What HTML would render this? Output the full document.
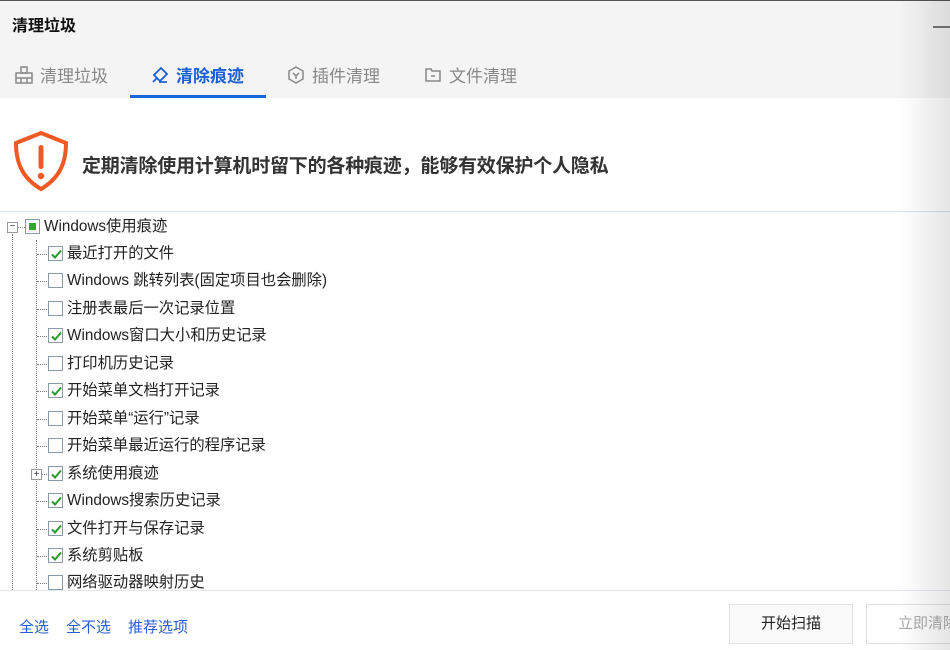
<!DOCTYPE html>
<html><head><meta charset="utf-8"><style>
*{margin:0;padding:0;box-sizing:border-box}
body{width:950px;height:650px;overflow:hidden;background:#fff;font-family:"Liberation Sans","Noto Sans CJK SC",sans-serif;position:relative}
.hdr{position:absolute;left:0;top:0;width:950px;height:98px;background:#f4f4f4;border-top:1px solid #555}
.title{position:absolute;left:12px;top:12px;font-size:16px;font-weight:bold;color:#111}
.min{position:absolute;left:933px;top:26px;width:17px;height:2px;background:#777}
.tab{position:absolute;top:62px;font-size:17px;color:#888;display:flex;align-items:center;gap:6px}
.tab.act{color:#1a5fd6;font-weight:bold}
.ul{position:absolute;left:130px;top:95px;width:136px;height:3px;background:#1a66dd}
.warn{position:absolute;left:82px;top:151px;font-size:19px;font-weight:bold;color:#333;letter-spacing:-0.2px}
.sep{position:absolute;left:0;top:211px;width:950px;height:1px;background:#d8e0ea}
.row{position:absolute;font-size:15.3px;color:#222;height:18px;line-height:18px;white-space:nowrap}
.cb{position:absolute;width:15px;height:15px;border:1px solid #8a99a8;background:#fff}
.cb svg{position:absolute;left:1px;top:1px}
.vl{position:absolute;border-left:1px dotted #777}
.hl{position:absolute;border-top:1px dotted #777;width:10px}
.bot{position:absolute;left:0;top:590px;width:950px;height:1px;background:#e3e8ee}
.lnk{position:absolute;top:616px;font-size:15px;color:#2a5bd7}
.btn{position:absolute;top:604px;height:40px;border:1px solid #e2e2e2;background:#fafafa;font-size:15px;color:#222;text-align:center;line-height:38px}
.shadow{position:absolute;left:900px;top:0;width:50px;height:650px;background:linear-gradient(to right,rgba(0,0,0,0),rgba(0,0,0,0.1))}
</style></head><body>
<div class="hdr"></div>
<div class="title">清理垃圾</div>
<div class="min"></div>
<div class="tab" style="left:14px"><svg width="20" height="20" viewBox="0 0 20 20" fill="none" stroke="#888" stroke-width="1.5"><rect x="7" y="2" width="6" height="6"/><rect x="2" y="8" width="16" height="10"/><path d="M2 13H18M7 13V18M13 13V18"/></svg>清理垃圾</div>
<div class="tab act" style="left:150px"><svg width="20" height="20" viewBox="0 0 20 20" fill="none" stroke="#1a5fd6" stroke-width="1.8"><path d="M11 3L17 9L10 16L4 10Z"/><path d="M7 13L3 17M9 17H17"/></svg>清除痕迹</div>
<div class="tab" style="left:286px"><svg width="20" height="20" viewBox="0 0 20 20" fill="none" stroke="#888" stroke-width="1.5"><path d="M10 2L17 6V14L10 18L3 14V6Z"/><path d="M7 8L10 11L13 8M10 11V14"/></svg>插件清理</div>
<div class="tab" style="left:423px"><svg width="20" height="20" viewBox="0 0 20 20" fill="none" stroke="#888" stroke-width="1.5"><path d="M3 4H8L9 6H17V16H3Z"/><path d="M8 11H12"/></svg>文件清理</div>
<div class="ul"></div>
<svg style="position:absolute;left:12px;top:129px" width="58" height="64" viewBox="0 0 58 64"><path d="M29 4L54 14C54 36 46 50 29 60C12 50 4 36 4 14Z" fill="none" stroke="#f05a22" stroke-width="4"/><rect x="26.5" y="16" width="5" height="24" rx="2.5" fill="#f05a22"/><circle cx="29" cy="47" r="3.2" fill="#f05a22"/></svg>
<div class="warn">定期清除使用计算机时留下的各种痕迹，能够有效保护个人隐私</div>
<div class="sep"></div>
<div class="vl" style="left:12px;top:234px;height:356px"></div>
<div class="vl" style="left:36px;top:240px;height:350px"></div>
<div style="position:absolute;left:7px;top:222px;width:11px;height:11px;border:1px solid #999;background:#fff;font-size:10px;line-height:8px;text-align:center;color:#335">−</div>
<div class="hl" style="left:18px;top:227px;width:7px"></div>
<div class="cb" style="left:25px;top:219px"><div style="position:absolute;left:3px;top:3px;width:7px;height:7px;background:#2fa82f"></div></div>
<div class="row" style="left:44px;top:218px">Windows使用痕迹</div>
<div id="items"></div>
<div style="position:absolute;left:31px;top:469px;width:11px;height:11px;border:1px solid #999;background:#fff;font-size:10px;line-height:9px;text-align:center;color:#335">+</div>
<div class="bot"></div>
<div class="lnk" style="left:19px">全选</div>
<div class="lnk" style="left:66px">全不选</div>
<div class="lnk" style="left:128px">推荐选项</div>
<div class="btn" style="left:729px;width:124px">开始扫描</div>
<div class="btn" style="left:866px;width:124px;color:#aaa;background:#fff">立即清除</div>
<div class="shadow"></div>
<script>
var it=[["最近打开的文件",1],["Windows 跳转列表(固定项目也会删除)",0],["注册表最后一次记录位置",0],["Windows窗口大小和历史记录",1],["打印机历史记录",0],["开始菜单文档打开记录",1],["开始菜单“运行”记录",0],["开始菜单最近运行的程序记录",0],["系统使用痕迹",1],["Windows搜索历史记录",1],["文件打开与保存记录",1],["系统剪贴板",1],["网络驱动器映射历史",0]];
var h="";it.forEach(function(a,i){var y=Math.round(246+i*27.45);
h+='<div class="hl" style="left:37px;top:'+(y+8)+'px"></div><div class="cb" style="left:48px;top:'+y+'px">'+(a[1]?'<svg width="13" height="13" viewBox="0 0 13 13"><path d="M2 6.5L5 9.5L11 2.5" fill="none" stroke="#2a9a2a" stroke-width="2"/></svg>':'')+'</div><div class="row" style="left:67px;top:'+(y-1)+'px">'+a[0]+'</div>';});
document.getElementById("items").innerHTML=h;
</script>
</body></html>
